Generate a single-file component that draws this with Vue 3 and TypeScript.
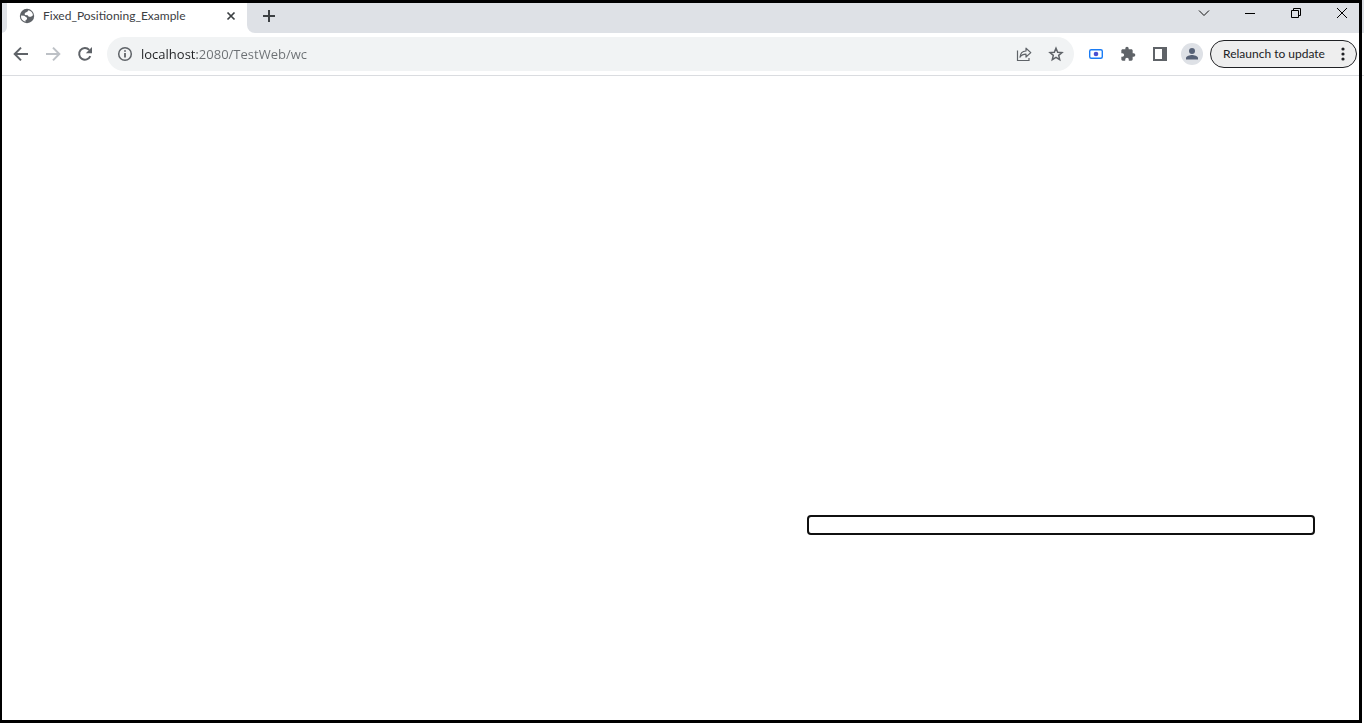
<script setup lang="ts">
import { ref } from 'vue'

const title = ref('Fixed_Positioning_Example')
const address = ref('localhost:2080/TestWeb/wc')
const field = ref('')
</script>

<template>
  <div class="browser">
    <header class="strip">
      <div class="edge"></div>
      <div class="tab">
        <svg class="globe" viewBox="0 0 16 16" width="16" height="16" aria-hidden="true">
          <circle cx="8" cy="8" r="7.2" fill="#5f6368" />
          <path d="M9.500 2.200L8.300 3.800 5.800 5v2l2.800.2 1.200 1.500 2.200.1L14 7.200A6 6 0 0 0 9.500 2.200z" fill="#fff" />
          <path d="M2 7.500l3.200.2 2.800 2v1.500L6.500 12.200v1.500A6 6 0 0 1 2 7.500z" fill="#fff" />
        </svg>
        <span class="title">{{ title }}</span>
        <button class="icon close" type="button" aria-label="Close tab">
          <svg viewBox="0 0 16 16" width="16" height="16"><path d="M4.500 4.500l7 7M11.500 4.500l-7 7" stroke="#3c4043" stroke-width="1.700" /></svg>
        </button>
      </div>
      <div class="rest">
        <button class="icon plus" type="button" aria-label="New tab">
          <svg viewBox="0 0 16 16" width="16" height="16"><path d="M8 2v12M2 8h12" stroke="#3c4043" stroke-width="2" /></svg>
        </button>
        <div class="window-controls">
          <button class="icon" type="button" aria-label="Search tabs">
            <svg viewBox="0 0 12 12" width="12" height="12"><path d="M1 3.500l5 5 5-5" fill="none" stroke="#111" /></svg>
          </button>
          <button class="icon" type="button" aria-label="Minimize">
            <svg viewBox="0 0 12 12" width="12" height="12"><path d="M1 6.500h10" stroke="#000" /></svg>
          </button>
          <button class="icon" type="button" aria-label="Restore">
            <svg viewBox="0 0 12 12" width="12" height="12"><path d="M1.500 3.500h7v7h-7zM3.500 3.500v-2h7v7h-2" fill="none" stroke="#000" /></svg>
          </button>
          <button class="icon" type="button" aria-label="Close window">
            <svg viewBox="0 0 12 12" width="12" height="12"><path d="M1 1l10 10M11 1L1 11" stroke="#000" /></svg>
          </button>
        </div>
      </div>
    </header>

    <nav class="toolbar">
      <button class="icon tool" type="button" aria-label="Back">
        <svg viewBox="0 0 16 16" width="16" height="16"><path d="M15 8H2.500M8 1.600L1.700 8 8 14.400" fill="none" stroke="#5f6368" stroke-width="2" /></svg>
      </button>
      <button class="icon tool" type="button" aria-label="Forward">
        <svg viewBox="0 0 16 16" width="16" height="16"><path d="M1 8h12.500M8 1.600L14.300 8 8 14.400" fill="none" stroke="#bdc1c6" stroke-width="2" /></svg>
      </button>
      <button class="icon tool" type="button" aria-label="Reload">
        <svg viewBox="0 0 16 16" width="16" height="16"><path d="M13.300 10.200A5.800 5.800 0 1 1 12.200 3.900" fill="none" stroke="#5f6368" stroke-width="2" /><path d="M15 1v6.200H8.800z" fill="#5f6368" /></svg>
      </button>

      <div class="omnibox">
        <button class="icon" type="button" aria-label="View site information">
          <svg viewBox="0 0 16 16" width="16" height="16"><circle cx="8" cy="8" r="6.300" fill="none" stroke="#5f6368" stroke-width="1.500" /><path d="M8 7v4.600M8 4.200v1.600" stroke="#5f6368" stroke-width="1.800" /></svg>
        </button>
        <input v-model="address" class="address" type="text" aria-label="Address" spellcheck="false" />
        <button class="icon tool" type="button" aria-label="Share this page">
          <svg viewBox="0 0 16 16" width="16" height="16"><path d="M1.500 4.500v10h11.500v-2.500" fill="none" stroke="#5f6368" stroke-width="1.200" /><path d="M4 11.200C4.300 7.300 6.400 5.200 10 5V2.200L14.800 6.600 10 11V8.200C7.300 8.200 5.300 9.100 4 11.200z" fill="none" stroke="#5f6368" stroke-width="1.200" stroke-linejoin="round" /></svg>
        </button>
        <button class="icon tool" type="button" aria-label="Bookmark this tab">
          <svg viewBox="0 0 16 16" width="16" height="16"><path d="M8 2.200l1.700 4 4.300.4-3.300 2.800 1 4.300L8 11.400l-3.700 2.300 1-4.300L2 6.600l4.300-.4z" fill="none" stroke="#5f6368" stroke-width="1.500" /></svg>
        </button>
      </div>

      <button class="icon tool" type="button" aria-label="Screen capture">
        <svg viewBox="0 0 16 16" width="16" height="16"><rect x="1.700" y="3.700" width="12.600" height="8.600" rx="1.500" fill="#fff" stroke="#1a7cf5" stroke-width="1.400" /><circle cx="8" cy="8" r="2.300" fill="#4a4fd0" /></svg>
      </button>
      <button class="icon tool" type="button" aria-label="Extensions">
        <svg viewBox="0 0 24 24" width="16" height="16"><path d="M20.500 11H19V7c0-1.100-.9-2-2-2h-4V3.500a2.500 2.500 0 0 0-5 0V5H4c-1.100 0-2 .9-2 2v3.800h1.500a2.700 2.700 0 0 1 0 5.400H2V20c0 1.100.9 2 2 2h3.800v-1.500a2.700 2.700 0 0 1 5.400 0V22H17c1.100 0 2-.9 2-2v-4h1.500a2.500 2.500 0 0 0 0-5z" fill="#5f6368" /></svg>
      </button>
      <button class="icon tool" type="button" aria-label="Side panel">
        <svg viewBox="0 0 16 16" width="16" height="16"><path d="M1 1h14v14H1zM3 3v10h7V3z" fill="#5f6368" fill-rule="evenodd" /></svg>
      </button>
      <button class="icon tool" type="button" aria-label="Profile">
        <svg viewBox="0 0 22 22" width="22" height="22"><circle cx="11" cy="11" r="11" fill="#dee1e6" /><circle cx="11" cy="8" r="3" fill="#566176" /><path d="M5 16.500v-1.500c0-2 4-3 6-3s6 1 6 3v1.500z" fill="#566176" /></svg>
      </button>
      <button class="relaunch" type="button">
        <span>Relaunch to update</span>
        <svg viewBox="0 0 4 16" width="4" height="16" aria-hidden="true"><g fill="#202124"><circle cx="2" cy="3" r="1.600" /><circle cx="2" cy="8" r="1.600" /><circle cx="2" cy="13" r="1.600" /></g></svg>
      </button>
    </nav>

    <main class="page">
      <input v-model="field" class="field" type="text" aria-label="Text" />
    </main>
  </div>
</template>

<style>
body {
  margin: 0;
  background: #fff;
}
</style>

<style scoped>
.browser {
  position: relative;
  box-sizing: border-box;
  min-height: 100vh;
  display: flex;
  flex-direction: column;
  overflow: hidden;
  font-family: Lato, "Open Sans", sans-serif;
  background: #fff;
}

/* black outline drawn around the window */
.browser::after {
  content: "";
  position: absolute;
  inset: 0 2px 1px 0;
  border: 3px solid #000;
  border-left-width: 2px;
  pointer-events: none;
}

.icon {
  display: flex;
  align-items: center;
  justify-content: center;
  flex: none;
  padding: 0;
  border: 0;
  background: none;
}

.icon svg {
  display: block;
}

.strip {
  display: flex;
  height: 33px;
}

.edge {
  width: 7px;
  background: #dee1e6;
  border-bottom-right-radius: 6px;
}

.tab {
  display: flex;
  align-items: center;
  width: 240px;
  box-sizing: border-box;
  padding: 0 8px 1px 12px;
}

.title {
  flex: 1;
  margin-left: 8px;
  font-size: 12px;
  line-height: 16px;
  color: #3c4043;
  white-space: nowrap;
}

.rest {
  flex: 1;
  display: flex;
  align-items: center;
  box-sizing: border-box;
  padding: 0 0 1px 14px;
  background: #dee1e6;
  border-bottom-left-radius: 8px;
}

.window-controls {
  display: flex;
  gap: 34px;
  margin: 0 16px 6px auto;
}

.toolbar {
  display: flex;
  align-items: center;
  height: 42px;
  padding: 0 7px 0 5px;
  border-bottom: 1px solid #dadce0;
}

.tool {
  width: 32px;
  height: 32px;
}

.omnibox {
  flex: 1;
  display: flex;
  align-items: center;
  height: 34px;
  box-sizing: border-box;
  margin: 0 6px;
  padding: 0 2px 0 10px;
  border-radius: 17px;
  background: #f1f3f4;
}

.address {
  flex: 1;
  min-width: 0;
  margin-left: 8px;
  padding: 0;
  border: 0;
  outline: 0;
  font: 13px/20px "Open Sans", "Noto Sans", sans-serif;
  color: transparent;
  caret-color: #202124;
  background: linear-gradient(90deg, #202124 56px, #6b6f73 56px);
  -webkit-background-clip: text;
  background-clip: text;
}

.relaunch {
  display: flex;
  align-items: center;
  justify-content: space-between;
  box-sizing: border-box;
  width: 147px;
  height: 28px;
  margin-left: 2px;
  padding: 0 11px 0 12px;
  border: 1px solid #202124;
  border-radius: 14px;
  background: #eee;
  color: #202124;
  font: 12px/16px Lato, "Open Sans", sans-serif;
  white-space: nowrap;
}

.page {
  flex: 1;
  display: flex;
  align-items: flex-end;
  justify-content: flex-end;
  padding: 0 49px 189px;
}

.field {
  box-sizing: border-box;
  width: 508px;
  height: 20px;
  padding: 0 4px;
  border: 2px solid #101010;
  border-radius: 4px;
  outline: 0;
  background: #fff;
}
</style>
